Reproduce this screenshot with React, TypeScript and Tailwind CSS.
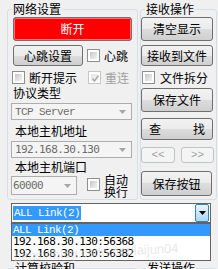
import type { ReactNode } from "react";

const btnFace =
  "flex items-center justify-center border border-[#707070] rounded-[3px] bg-[linear-gradient(#f2f2f2_0%,#ebebeb_50%,#dddddd_50%,#cfcfcf_100%)] text-black";

function Btn({ children, className = "" }: { children: ReactNode; className?: string }) {
  return <button className={`${btnFace} ${className}`}>{children}</button>;
}

function Check({ className = "", checked = false, disabled = false }: { className?: string; checked?: boolean; disabled?: boolean }) {
  return (
    <span
      className={`w-[13px] h-[13px] shrink-0 p-[2px] bg-white border ${disabled ? "border-[#c6c6c6]" : "border-[#8e8f8f]"} ${className}`}
    >
      <span
        className={`relative block w-full h-full ${disabled ? "bg-[linear-gradient(135deg,#e4e4e4,#f8f8f8)]" : "bg-[linear-gradient(135deg,#c6c6c6,#f4f4f4)]"}`}
      >
        {checked && (
          <svg width="9" height="9" viewBox="0 0 9 9" className="absolute -left-[0px] -top-[0px]">
            <path d="M1.5 4.5 L3.5 7 L7.5 1.5" fill="none" stroke="#a8a8a8" strokeWidth="1.4" />
          </svg>
        )}
      </span>
    </span>
  );
}

function Combo({ value, className = "", font }: { value: string; className?: string; font: string }) {
  return (
    <div className={`flex items-center border border-[#adadad] bg-[#f4f4f4] text-[#6d6d6d] ${className}`}>
      <span className={`flex-1 text-[11px] tracking-[-0.6px] leading-[14px] ${font}`}>{value}</span>
      <svg width="7" height="4" viewBox="0 0 7 4" className="mr-[5px]">
        <path d="M0 0 H7 L3.5 4 Z" fill="#a6a6a6" />
      </svg>
    </div>
  );
}

const mono = "font-['Liberation_Mono',monospace]";
const sansMono = "font-['DejaVu_Sans_Mono',monospace]";

export default function App() {
  return (
    <div className="relative w-[218px] h-[269px] overflow-hidden bg-[#f0f0f0] text-[12px] leading-[14px] text-black font-['Noto_Sans_CJK_SC',sans-serif]">
      <div className="flex">
        {/* 网络设置 */}
        <fieldset className="ml-[7px] mt-[2px] w-[131px] h-[198px] border border-[#d5dfe5] rounded-[3px]">
          <legend className="ml-[4px] px-[1px] leading-[14px]">网络设置</legend>
          <div className="flex flex-col">
            <button className="ml-[5px] mt-[1px] w-[119px] h-[24px] flex items-center justify-center border border-[#707070] rounded-[3px] bg-[#ff0000] shadow-[inset_0_0_0_1px_#ff6a6a] text-white">
              断开
            </button>
            <div className="flex items-center ml-[5px] mt-[4px] h-[21px]">
              <Btn className="w-[70px] h-[21px]">心跳设置</Btn>
              <Check className="ml-[4px]" />
              <span className="ml-[4px]">心跳</span>
            </div>
            <div className="flex items-center ml-[4px] mt-[4px] h-[15px]">
              <Check />
              <span className="ml-[4px]">断开提示</span>
              <Check className="ml-[11px]" checked disabled />
              <span className="ml-[4px] text-[#a0a0a0]">重连</span>
            </div>
            <div className="ml-[5px] mt-[1px]">协议类型</div>
            <Combo className="ml-[3px] mt-[3px] w-[121px] h-[17px] pl-[3px]" value="TCP Server" font={mono} />
            <div className="ml-[7px] mt-[4px]">本地主机地址</div>
            <Combo className="ml-[3px] mt-[3px] w-[121px] h-[17px] pl-[3px]" value="192.168.30.130" font={sansMono} />
            <div className="ml-[7px] mt-[2px]">本地主机端口</div>
            <div className="flex items-start ml-[3px] mt-[2px]">
              <Combo className="w-[66px] h-[19px] pl-[1px]" value="60000" font={sansMono} />
              <Check className="ml-[10px] mt-[2px]" />
              <span className="ml-[4px] -mt-[2px] w-[24px] leading-[12px]">自动换行</span>
            </div>
          </div>
        </fieldset>

        {/* 接收操作 */}
        <fieldset className="ml-[2px] mt-[2px] w-[77px] h-[198px] border border-[#d5dfe5] rounded-[3px]">
          <legend className="ml-[4px] px-[1px] leading-[14px]">接收操作</legend>
          <div className="flex flex-col">
            <Btn className="mt-[1px] w-[72px] h-[24px]">清空显示</Btn>
            <Btn className="mt-[4px] w-[72px] h-[21px]">接收到文件</Btn>
            <div className="flex items-center ml-[1px] mt-[4px] h-[15px]">
              <Check />
              <span className="ml-[5px]">文件拆分</span>
            </div>
            <Btn className="mt-[3px] w-[72px] h-[24px]">保存文件</Btn>
            <Btn className="mt-[6px] w-[72px] h-[22px] !justify-between px-[7px]">
              <span>查</span>
              <span>找</span>
            </Btn>
            <div className="flex gap-[6px] mt-[7px]">
              <button className={`w-[34px] h-[16px] flex items-center justify-center border border-[#bfc4c7] rounded-[3px] bg-[#f4f4f4] text-[#a0a0a0] text-[11px] ${mono}`}>
                &lt;&lt;
              </button>
              <button className={`w-[33px] h-[16px] flex items-center justify-center border border-[#bfc4c7] rounded-[3px] bg-[#f4f4f4] text-[#a0a0a0] text-[11px] ${mono}`}>
                &gt;&gt;
              </button>
            </div>
            <Btn className="mt-[8px] w-[71px] h-[25px]">保存按钮</Btn>
          </div>
        </fieldset>
      </div>

      {/* link selector, opened */}
      <div className="relative ml-[11px] mt-[3px] w-[200px]">
        <div className="flex items-center h-[20px] border border-[#646464] bg-white">
          <span className={`ml-[1px] px-[1px] h-[14px] bg-[#3399ff] text-white text-[11px] tracking-[-0.6px] leading-[14px] ${mono}`}>
            ALL Link(2)
          </span>
          <span className="ml-auto mr-[1px] w-[14px] h-[18px] flex items-center justify-center border border-[#3c7fb1] rounded-[2px] bg-[linear-gradient(#eaf6fd,#a7d9f5)]">
            <svg width="7" height="4" viewBox="0 0 7 4">
              <path d="M0 0 H7 L3.5 4 Z" fill="#000" />
            </svg>
          </span>
        </div>
        <div className="absolute left-0 top-full z-10 w-[200px] border border-[#646464] bg-white text-[11px] tracking-[-0.6px] leading-[12px]">
          <div className={`h-[12px] pl-[1px] bg-[#3399ff] text-white ${mono}`}>ALL Link(2)</div>
          <div className={`h-[12px] pl-[1px] ${sansMono}`}>192.168.30.130:56368</div>
          <div className={`h-[12px] pl-[1px] ${sansMono}`}>192.168.30.130:56382</div>
        </div>
      </div>

      <div className="flex mt-[38px]">
        <fieldset className="ml-[7px] w-[131px] h-[30px] border border-[#d5dfe5] rounded-[3px]">
          <legend className="ml-[6px] px-[1px]">计算校验和</legend>
        </fieldset>
        <fieldset className="ml-[2px] w-[77px] h-[30px] border border-[#d5dfe5] rounded-[3px]">
          <legend className="ml-[5px] px-[1px]">发送操作</legend>
        </fieldset>
      </div>

      {/* watermark */}
      <div className="absolute left-[14px] top-[250px] z-20 -rotate-[3deg] origin-left text-[13px] leading-[14px] text-[#d8d8d8]/60 font-['Liberation_Sans',sans-serif] whitespace-nowrap">
        https://blog.csdn.net/laijun04
      </div>
    </div>
  );
}
